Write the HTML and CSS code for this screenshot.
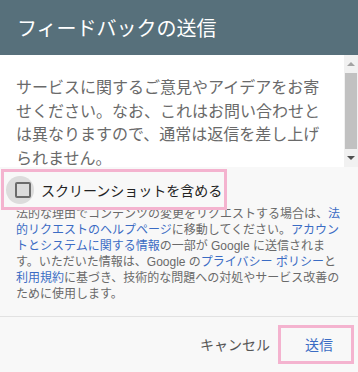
FILE: index.html
```html
<!DOCTYPE html>
<html lang="ja">
<head>
<meta charset="utf-8">
<title>フィードバックの送信</title>
<link rel="stylesheet" href="styles.css">
</head>
<body>
<div class="dialog">
  <div class="header">フィードバックの送信</div>
  <div class="scroll">
    <div class="scroll-text">サービスに関するご意見やアイデアをお寄せください。なお、これはお問い合わせとは異なりますので、通常は返信を差し上げられません。</div>
    <div class="scrollbar">
      <div class="sb-btn"><span class="arrow-up"></span></div>
      <div class="sb-thumb"></div>
      <div class="sb-btn"><span class="arrow-down"></span></div>
    </div>
  </div>
  <div class="lower">
    <div class="cb-row">
      <div class="cb-circle"><span class="cb-box"></span></div>
      <span class="cb-label">スクリーンショットを含める</span>
    </div>
    <div class="legal-clip">
      <p class="legal">法的な理由でコンテンツの変更をリクエストする場合は、<a class="link">法的リクエストのヘルプページ</a>に移動してください。<a class="link">アカウントとシステムに関する情報</a>の一部が Google に送信されます。いただいた情報は、Google の<a class="link">プライバシー ポリシー</a>と<a class="link">利用規約</a>に基づき、技術的な問題への対処やサービス改善のために使用します。</p>
    </div>
  </div>
  <div class="footer">
    <span class="btn cancel">キャンセル</span>
    <span class="btn send">送信</span>
  </div>
</div>
</body>
</html>
```

FILE: styles.css
```css
* { box-sizing: border-box; }
html, body { margin: 0; padding: 0; }
body {
  width: 358px;
  height: 372px;
  overflow: hidden;
  font-family: "Liberation Sans", "Noto Sans CJK JP", sans-serif;
  background: #ffffff;
}
.dialog {
  display: flex;
  flex-direction: column;
  width: 358px;
  height: 372px;
}
.header {
  height: 55px;
  flex: none;
  background: #57707b;
  color: #ffffff;
  font-size: 20px;
  display: flex;
  align-items: center;
  padding-left: 17px;
  padding-bottom: 1px;
}
.scroll {
  height: 112px;
  flex: none;
  display: flex;
  background: #ffffff;
}
.scroll-text {
  flex: none;
  width: 344px;
  overflow: hidden;
  padding: 21px 22px 0 16px;
  font-size: 16px;
  line-height: 23.5px;
  color: #6a6a6a;
}
.scrollbar {
  width: 14px;
  flex: none;
  background: #f1f1f1;
  display: flex;
  flex-direction: column;
  align-items: center;
}
.sb-btn {
  height: 18px;
  width: 14px;
  display: flex;
  align-items: center;
  justify-content: center;
}
.sb-thumb {
  width: 12px;
  height: 77px;
  background: #c1c1c1;
}
.arrow-up {
  width: 0; height: 0;
  border-left: 4px solid transparent;
  border-right: 4px solid transparent;
  border-bottom: 4px solid #a3a3a3;
}
.arrow-down {
  width: 0; height: 0;
  border-left: 4px solid transparent;
  border-right: 4px solid transparent;
  border-top: 4px solid #505050;
}
.lower {
  height: 149px;
  flex: none;
  background: #f8f8f8;
  overflow: hidden;
}
.cb-row {
  position: relative;
  z-index: 1;
  margin: 2px 0 0 1px;
  width: 226px;
  height: 41px;
  border: 3px solid #f4b3cf;
  background: #f8f8f8;
  display: flex;
  align-items: center;
  padding-left: 2px;
  padding-top: 1px;
}
.cb-circle {
  width: 28px;
  height: 28px;
  border-radius: 50%;
  background: #dcdcdc;
  display: flex;
  align-items: center;
  justify-content: center;
  padding-left: 6px;
  flex: none;
}
.cb-box {
  width: 16px;
  height: 16px;
  border: 2px solid #6b6b6b;
  border-radius: 2px;
}
.cb-label {
  margin-left: 7px;
  font-size: 14px;
  color: #222222;
  white-space: nowrap;
}
.legal-clip {
  margin-top: -4px;
}
.legal {
  margin: 0;
  padding: 0 14px 0 16px;
  font-size: 12px;
  line-height: 16px;
  color: #6a6a6a;
}
.link {
  color: #3b6cc4;
  text-decoration: none;
}
.footer {
  flex: 1;
  border-top: 1px solid #e2e2e2;
  background: #f8f8f8;
  display: flex;
  justify-content: flex-end;
  align-items: center;
  gap: 8px;
  padding-right: 4px;
  padding-bottom: 1px;
}
.btn {
  font-size: 14px;
}
.cancel {
  color: #555555;
}
.send {
  width: 76px;
  height: 39px;
  border: 3px solid #f4b3cf;
  color: #3b6cc4;
  display: flex;
  align-items: center;
  justify-content: center;
  padding-left: 6px;
}
```
